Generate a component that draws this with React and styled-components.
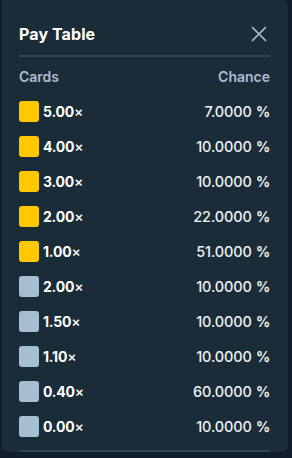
import React from "react";
import styled, { createGlobalStyle } from "styled-components";

const Global = createGlobalStyle`
  html, body { margin: 0; padding: 0; background: #0f1e2a; }
  body { font-family: Inter, "Noto Sans", sans-serif; -webkit-font-smoothing: antialiased; }
  #root { width: 292px; height: 458px; }
`;

const Page = styled.div`
  width: 292px;
  height: 458px;
  padding: 0 4px 0 2px;
  box-sizing: border-box;
`;

const Panel = styled.div`
  height: 452px;
  background: #1a2c38;
  border-radius: 0 6px 6px 6px;
  padding: 0 18px 0 17px;
  box-sizing: border-box;
  overflow: hidden;
  display: flex;
  flex-direction: column;
`;

const Header = styled.div`
  display: flex;
  align-items: center;
  justify-content: space-between;
  height: 36px;
  margin-top: 16px;
  padding-bottom: 3px;
`;

const Title = styled.div`
  color: #ffffff;
  font-weight: 700;
  font-size: 16px;
  letter-spacing: 0.1px;
`;

const CloseButton = styled.button`
  background: none;
  border: none;
  padding: 0;
  margin-right: 3px;
  width: 16px;
  height: 16px;
  display: flex;
  align-items: center;
  justify-content: center;
  cursor: pointer;
`;

const Divider = styled.div`
  height: 2px;
  background: #2f4553;
  flex-shrink: 0;
`;

const Table = styled.div`
  display: flex;
  flex-direction: column;
  padding-top: 2px;
`;

const Row = styled.div`
  height: 35px;
  display: flex;
  align-items: center;
  justify-content: space-between;
`;

const HeadCell = styled.div`
  color: #b1bad3;
  font-weight: 600;
  font-size: 14px;
`;

const Card = styled.div`
  display: flex;
  align-items: center;
  gap: 4px;
`;

const Swatch = styled.div`
  width: 20px;
  height: 21px;
  border-radius: 3px;
  background: ${(p) => (p.$gold ? "#ffc800" : "#a3bfd1")};
`;

const Multiplier = styled.span`
  color: #ffffff;
  font-weight: 700;
  font-size: 14px;
  letter-spacing: -0.2px;
`;

const Times = styled.span`
  font-size: 14px;
  font-weight: 500;
  margin-left: 0px;
`;

const Chance = styled.span`
  color: #edf0f5;
  font-weight: 500;
  font-size: 14.5px;
  letter-spacing: -0.1px;
`;

const Pct = styled.span`
  font-size: 14px;
  font-weight: 700;
  margin-left: 4px;
`;

const BottomLine = styled.div`
  height: 2px;
  background: #2f4553;
  margin-top: auto;
`;

const rows = [
  ["5.00", "7.0000", true],
  ["4.00", "10.0000", true],
  ["3.00", "10.0000", true],
  ["2.00", "22.0000", true],
  ["1.00", "51.0000", true],
  ["2.00", "10.0000", false],
  ["1.50", "10.0000", false],
  ["1.10", "10.0000", false],
  ["0.40", "60.0000", false],
  ["0.00", "10.0000", false],
];

export default function App() {
  return (
    <Page>
      <Global />
      <Panel>
        <Header>
          <Title>Pay Table</Title>
          <CloseButton aria-label="Close">
            <svg width="16" height="16" viewBox="0 0 16 16">
              <path d="M1.5 1.5 L14.5 14.5 M14.5 1.5 L1.5 14.5" stroke="#b1bad3" strokeWidth="1.7" strokeLinecap="round" />
            </svg>
          </CloseButton>
        </Header>
        <Divider />
        <Table>
          <Row>
            <HeadCell>Cards</HeadCell>
            <HeadCell>Chance</HeadCell>
          </Row>
          {rows.map(([m, c, gold], i) => (
            <Row key={i}>
              <Card>
                <Swatch $gold={gold} />
                <Multiplier>
                  {m}
                  <Times>×</Times>
                </Multiplier>
              </Card>
              <Chance>
                {c}
                <Pct>%</Pct>
              </Chance>
            </Row>
          ))}
        </Table>
        <BottomLine />
      </Panel>
    </Page>
  );
}
